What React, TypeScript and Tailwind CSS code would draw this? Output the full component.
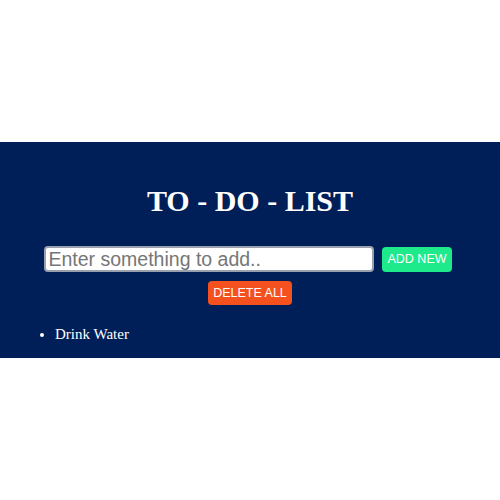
function App() {
  return (
    <div className="min-h-screen flex items-center bg-white">
      <section className="w-full bg-[#001f58] pt-[41px] pb-[12px] font-['Liberation_Serif',serif]">
        <h1 className="text-center text-white text-[30px] font-bold leading-[36px]">TO - DO - LIST</h1>

        <div className="mt-[27px] pr-[4px] flex justify-center items-center gap-[8px] font-['Liberation_Sans',sans-serif]">
          <input
            type="text"
            placeholder="Enter something to add.."
            className="w-[330px] h-[26px] px-[2px] bg-white border-2 border-gray-400 rounded-[4px] text-[19.5px] text-black placeholder:text-[#767676] outline-none"
          />
          <button className="h-[25px] px-[5px] bg-[#1ee98b] text-white text-[12.5px] rounded-[4px]">ADD NEW</button>
        </div>

        <div className="mt-[9px] flex justify-center font-['Liberation_Sans',sans-serif]">
          <button className="h-[24px] px-[5px] bg-[#f4511e] text-white text-[12.5px] rounded-[4px]">DELETE ALL</button>
        </div>

        <ul className="mt-[18px] pl-[55px] list-disc text-white text-[15px]">
          <li>Drink Water</li>
        </ul>
      </section>
    </div>
  )
}

export default App
